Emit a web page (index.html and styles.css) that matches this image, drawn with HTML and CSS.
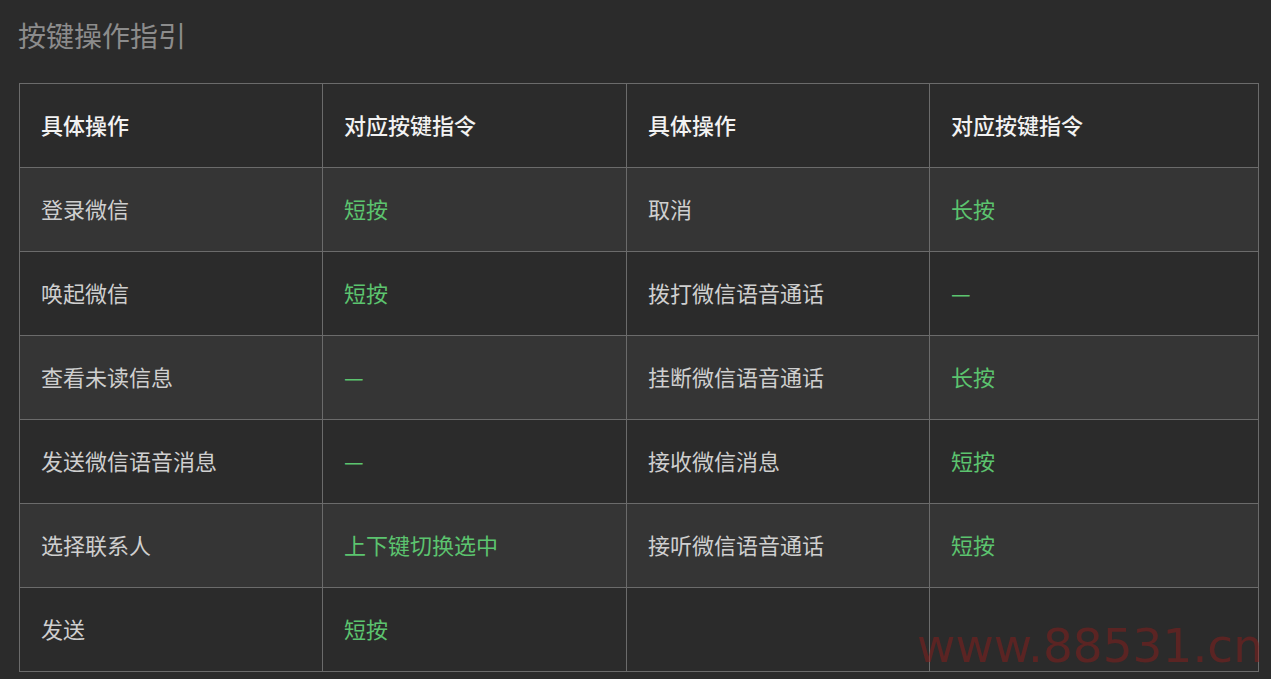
FILE: index.html
```html
<!DOCTYPE html>
<html>
<head>
    <meta charset="utf-8">
    <title>按键操作指引</title>
    <link rel="stylesheet" href="styles.css">
</head>
<body>
    <h2 class="title">按键操作指引</h2>

    <table class="guide">
        <tr class="head">
            <th>具体操作</th>
            <th>对应按键指令</th>
            <th>具体操作</th>
            <th>对应按键指令</th>
        </tr>
        <tr class="alt">
            <td>登录微信</td>
            <td class="key">短按</td>
            <td>取消</td>
            <td class="key">长按</td>
        </tr>
        <tr>
            <td>唤起微信</td>
            <td class="key">短按</td>
            <td>拨打微信语音通话</td>
            <td class="key">—</td>
        </tr>
        <tr class="alt">
            <td>查看未读信息</td>
            <td class="key">—</td>
            <td>挂断微信语音通话</td>
            <td class="key">长按</td>
        </tr>
        <tr>
            <td>发送微信语音消息</td>
            <td class="key">—</td>
            <td>接收微信消息</td>
            <td class="key">短按</td>
        </tr>
        <tr class="alt">
            <td>选择联系人</td>
            <td class="key">上下键切换选中</td>
            <td>接听微信语音通话</td>
            <td class="key">短按</td>
        </tr>
        <tr>
            <td>发送</td>
            <td class="key">短按</td>
            <td></td>
            <td></td>
        </tr>
    </table>

    <div class="watermark">www.88531.cn</div>
</body>
</html>
```

FILE: styles.css
```css
body {
    margin: 0;
    padding: 0 19px;
    background-color: #2b2b2b;
    font-family: "Noto Sans CJK SC", "Noto Sans", sans-serif;
    color: #cfcfcf;
}

.title {
    margin: 14px 0 27px -1px;
    font-size: 28px;
    line-height: 42px;
    font-weight: normal;
    color: #8c8c8c;
}

.guide {
    width: 1240px;
    border-collapse: collapse;
    table-layout: fixed;
}

.guide th,
.guide td {
    height: 84px;
    padding: 0 0 3px 21px;
    border: 1px solid #6b6b6b;
    text-align: left;
    font-size: 22px;
    font-weight: normal;
    box-sizing: border-box;
}

.guide th:nth-child(1),
.guide th:nth-child(3) {
    width: 303px;
}

.guide th:nth-child(2) {
    width: 304px;
}

.guide th {
    color: #f2f2f2;
    font-weight: 500;
}

.guide tr.alt {
    background-color: #353535;
}

.guide .key {
    color: #5cc46f;
}

.watermark {
    position: fixed;
    right: 8px;
    bottom: 6px;
    font-family: "DejaVu Sans", sans-serif;
    font-size: 47px;
    color: rgba(140, 30, 28, 0.5);
    pointer-events: none;
}
```
